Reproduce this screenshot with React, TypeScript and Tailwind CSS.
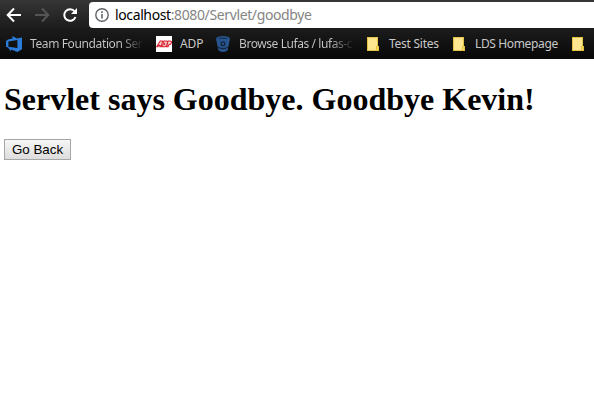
import type { ReactNode } from "react";

function FolderIcon() {
  return (
    <svg width="12" height="14" viewBox="0 0 12 14" shapeRendering="crispEdges" className="shrink-0">
      <path d="M0 0h11v9h1v5H0z" fill="#e6c243" />
      <path d="M1 1h9v8H9v4H1z" fill="#fde68f" />
      <path d="M10 10h1v3h-1z" fill="#fbdc69" />
    </svg>
  );
}

function FoundationIcon() {
  return (
    <svg width="16" height="16" viewBox="0 0 16 16" className="shrink-0">
      <path
        fillRule="evenodd"
        fill="#2b7bd9"
        d="M0 5 2 3.4 6.5 2.4V0l4.3 2.6L16 1.6v11.6L11.5 16 5 13.6V15.6L2 11.4 0 10.8zM2.4 5.6v5.2L11.4 12V4z"
      />
    </svg>
  );
}

function AdpIcon() {
  return (
    <svg width="16" height="16" viewBox="0 0 16 16" className="shrink-0">
      <path fill="#fff" d="M0 0h16v16H0z" />
      <g fill="#f7d4d6" stroke="#d8232f" strokeWidth="1.1" strokeLinejoin="round">
        <path d="M.7 10.8 4.2 5h2.3L5.3 10.8H3.8L4.2 9.4H2.7l-.8 1.4z" />
        <path d="M6.5 10.8 7.7 5h2.6q1.6.2 1.2 2.4-.5 3.2-2.5 3.4zM8.4 9l.5-2.4" />
        <path d="M10.6 10.8 12 5h2q1.8.3 1.4 1.9-.4 1.8-2.7 1.8l-.6 2.1z" />
      </g>
    </svg>
  );
}

function BucketIcon() {
  return (
    <svg width="14" height="16" viewBox="0 0 14 16" className="shrink-0">
      <path fill="#28558f" d="M0 2.5Q1 0 7 0t7 2.5L12.3 11 11.8 14Q10.5 16 7 16t-4.8-2L1.7 11z" />
      <ellipse cx="7" cy="2.3" rx="5" ry=".8" fill="#183658" />
      <path d="M1.8 11.2Q7 14 12.2 11.2" fill="none" stroke="#14253b" strokeWidth="1.1" />
      <circle cx="7" cy="7.8" r="1.9" fill="#28558f" stroke="#14253b" strokeWidth="1.3" />
    </svg>
  );
}

function Bookmark({ icon, className, children }: { icon: ReactNode; className: string; children?: ReactNode }) {
  return (
    <div className={`flex h-4 shrink-0 items-center whitespace-nowrap ${className}`}>
      {icon}
      {children}
    </div>
  );
}

export default function App() {
  return (
    <main className="h-[408px] w-[594px] overflow-hidden bg-white">
      <header className="h-[59px] bg-linear-to-b from-[#363636] via-[#1b1b1b] to-[#080808] font-['Noto_Sans','Open_Sans',sans-serif]">
        <div className="flex h-[29px] pl-1.5 pt-0.5">
          <nav className="flex h-[26px] w-[83px] shrink-0 items-center">
            <svg width="74" height="18" viewBox="0 0 74 18" fill="none" strokeWidth="2">
              <path d="M15 9H2M8 2.5 1.7 9 8 15.5" stroke="#fff" />
              <path d="M29 9h13M36 2.5 42.3 9 36 15.5" stroke="#555" />
              <path d="M68.7 5.5A5.8 5.8 0 1 0 69.5 11" stroke="#fff" />
              <path d="M71 2v6h-6z" fill="#fff" />
            </svg>
          </nav>
          <div className="flex h-[26px] flex-1 items-center rounded-l-sm bg-white pl-1.5">
            <svg width="14" height="14" viewBox="0 0 14 14" fill="none" className="shrink-0">
              <circle cx="7" cy="7" r="6.2" stroke="#5f6368" strokeWidth="1.4" />
              <path d="M7 6v4.5M7 3.3v1.6" stroke="#5f6368" strokeWidth="1.6" />
            </svg>
            <span className="ml-1.5 whitespace-nowrap text-[14px] leading-5 tracking-[-0.38px] text-[#858585]">
              <span className="text-black">localhost</span>:8080/Servlet/goodbye
            </span>
          </div>
        </div>
        <div className="flex h-[30px] items-center pl-1.5 text-[12px] leading-4 text-[#c8c8c8]">
          <Bookmark icon={<FoundationIcon />} className="w-[150px]">
            <span className="ml-2 w-[113px] bg-linear-to-r from-[#c8c8c8] from-80% to-[#1c1c1c] bg-clip-text tracking-[-0.38px] text-transparent">
              Team Foundation Ser
            </span>
          </Bookmark>
          <Bookmark icon={<AdpIcon />} className="w-[60px]">
            <span className="ml-2 tracking-[-0.1px]">ADP</span>
          </Bookmark>
          <Bookmark icon={<BucketIcon />} className="w-[151px]">
            <span className="ml-[9px] w-[114px] bg-linear-to-r from-[#c8c8c8] from-80% to-[#1c1c1c] bg-clip-text tracking-[-0.42px] text-transparent">
              Browse Lufas / lufas-c
            </span>
          </Bookmark>
          <Bookmark icon={<FolderIcon />} className="w-[86px]">
            <span className="ml-2.5 tracking-[-0.26px]">Test Sites</span>
          </Bookmark>
          <Bookmark icon={<FolderIcon />} className="w-[119px]">
            <span className="ml-2.5 tracking-[-0.36px]">LDS Homepage</span>
          </Bookmark>
          <Bookmark icon={<FolderIcon />} className="w-3" />
        </div>
      </header>
      <section className="flex flex-col items-start pl-1 pt-[22px]">
        <h1 className="whitespace-nowrap font-['Liberation_Serif',serif] text-[32px] font-bold leading-[37px] text-black">
          Servlet says Goodbye. Goodbye Kevin!
        </h1>
        <button className="mt-[21px] flex h-[21px] w-[67px] items-center justify-center whitespace-nowrap border border-[#a6a6a6] bg-linear-to-b from-[#f6f6f6] to-[#dddddd] font-['Liberation_Sans',sans-serif] text-[13.333px] leading-[15px] text-black">
          Go Back
        </button>
      </section>
    </main>
  );
}
